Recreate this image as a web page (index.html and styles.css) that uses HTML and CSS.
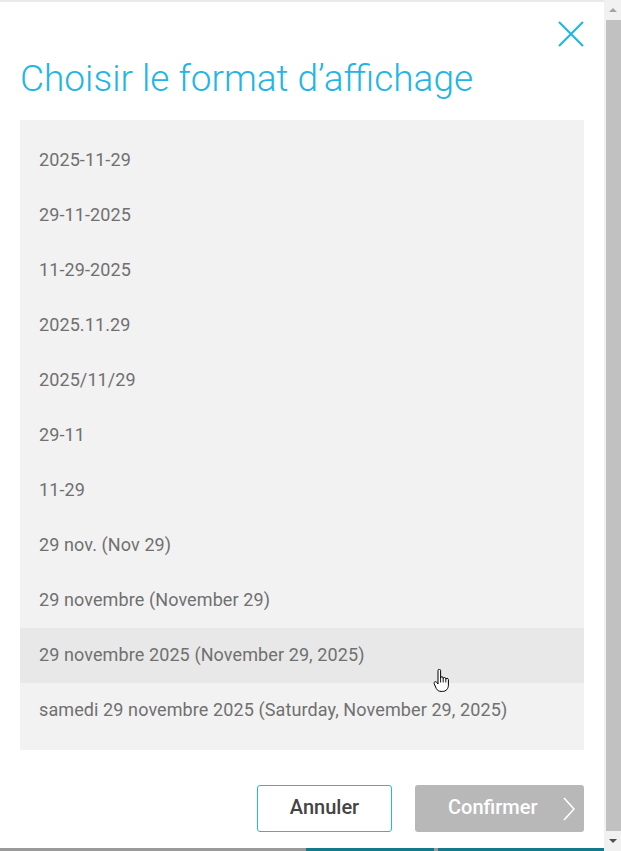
FILE: index.html
```html
<!DOCTYPE html>
<html lang="fr">
<head>
<meta charset="utf-8">
<link rel="stylesheet" href="styles.css">
</head>
<body>
<div class="screen">
  <div class="modal">
    <div class="top-line"></div>
    <div class="close-row">
      <svg class="close" width="26" height="26" viewBox="0 0 26 26"><path d="M1 1 L25 25 M25 1 L1 25" stroke="#22b5e5" stroke-width="2.2" fill="none"/></svg>
    </div>
    <h1 class="title">Choisir le format d’affichage</h1>
    <ul class="list">
      <li>2025-11-29</li>
      <li>29-11-2025</li>
      <li>11-29-2025</li>
      <li>2025.11.29</li>
      <li>2025/11/29</li>
      <li>29-11</li>
      <li>11-29</li>
      <li>29 nov. (Nov 29)</li>
      <li>29 novembre (November 29)</li>
      <li class="hover">29 novembre 2025 (November 29, 2025)
        <svg class="cursor" width="18" height="24" viewBox="0 0 18 24"><path d="M5 1.5c0-.8.6-1.3 1.3-1.3s1.3.5 1.3 1.3v7.5c0-.8.6-1.3 1.3-1.3s1.3.5 1.3 1.3v.8c0-.8.6-1.3 1.3-1.3s1.3.5 1.3 1.3v.8c0-.8.6-1.3 1.3-1.3s1.3.5 1.3 1.3v5.5c0 3.5-2.3 6.3-5.8 6.3h-1.6c-2.2 0-3.5-1-4.7-2.8L1.3 15c-.5-.8-.3-1.7.4-2.1.7-.4 1.6-.2 2.1.5L5 15z" fill="#fff" stroke="#000" stroke-width="1" stroke-linejoin="round"/><path d="M7.6 9v4.5M10.2 10v3.5M12.8 10.8v2.7" stroke="#000" stroke-width="0.9"/></svg>
      </li>
      <li>samedi 29 novembre 2025 (Saturday, November 29, 2025)</li>
    </ul>
    <div class="actions">
      <button class="btn btn-cancel">Annuler</button>
      <button class="btn btn-confirm">Confirmer
        <svg class="chev" width="12" height="24" viewBox="0 0 12 24"><path d="M1 1 L11 12 L1 23" stroke="#fff" stroke-width="1.6" fill="none"/></svg>
      </button>
    </div>
  </div>
  <div class="scrollbar">
    <div class="arrow up"></div>
    <div class="thumb"></div>
    <div class="arrow down"></div>
  </div>
  <div class="bottom-strip">
    <div class="seg gray1"></div>
    <div class="seg teal1"></div>
    <div class="seg gray2"></div>
    <div class="seg teal2"></div>
  </div>
</div>
</body>
</html>
```

FILE: styles.css
```css
* { box-sizing: border-box; }
html, body { margin: 0; padding: 0; }
body {
  width: 621px;
  height: 851px;
  overflow: hidden;
  background: #fff;
  font-family: Roboto, "Liberation Sans", sans-serif;
}
.screen {
  position: relative;
  width: 621px;
  height: 851px;
  display: grid;
  grid-template-columns: 604px 17px;
  grid-template-rows: 848px 3px;
}
.modal {
  grid-column: 1;
  grid-row: 1;
  background: #fff;
  display: flex;
  flex-direction: column;
  padding: 0 20px;
  min-width: 0;
}
.top-line {
  height: 2px;
  margin: 0 -20px;
  background: #e9e9e9;
}
.close-row {
  display: flex;
  justify-content: flex-end;
  padding-top: 19px;
  height: 45px;
}
.close { display: block; margin-right: 0; }
.title {
  margin: 12px 0 0;
  font-weight: 300;
  font-size: 37px;
  line-height: 40px;
  color: #22b5e5;
  height: 61px;
  white-space: nowrap;
}
.list {
  list-style: none;
  margin: 0;
  padding: 13px 0 12px;
  background: #f2f2f2;
}
.list li {
  position: relative;
  height: 55px;
  line-height: 54px;
  padding-left: 19px;
  font-size: 18px;
  letter-spacing: 0.1px;
  color: #707070;
  white-space: nowrap;
}
.list li.hover { background: #e8e8e8; }
.cursor {
  position: absolute;
  left: 413px;
  top: 41px;
}
.actions {
  display: flex;
  justify-content: flex-end;
  gap: 23px;
  margin-top: 35px;
}
.btn {
  height: 47px;
  border-radius: 3px;
  font-family: Roboto, "Liberation Sans", sans-serif;
  font-size: 20px;
  font-weight: 500;
  padding: 0 0 3px;
  display: flex;
  align-items: center;
  justify-content: center;
}
.btn-cancel {
  width: 135px;
  background: #fff;
  border: 1px solid #29b6e6;
  color: #444;
}
.btn-confirm {
  width: 169px;
  background: #b8b8b8;
  border: none;
  color: #fff;
  justify-content: flex-start;
  padding-left: 33px;
}
.chev { margin-left: 25px; margin-top: 3px; }
.scrollbar {
  grid-column: 2;
  grid-row: 1 / 3;
  background: #f1f1f1;
  display: flex;
  flex-direction: column;
  align-items: center;
}
.arrow { width: 0; height: 0; border-left: 4px solid transparent; border-right: 4px solid transparent; }
.arrow.up { border-bottom: 4px solid #a3a3a3; margin: 8px 0 8px; }
.arrow.down { border-top: 4px solid #505050; margin: 8px 0 8px; }
.thumb { flex: 1; width: 15px; background: #c1c1c1; margin-left: 2px; }
.bottom-strip {
  grid-column: 1;
  grid-row: 2;
  display: flex;
}
.seg { height: 3px; }
.gray1 { width: 306px; background: #9a9a9a; }
.teal1 { width: 128px; background: #127a8a; }
.gray2 { width: 4px; background: #9a9a9a; }
.teal2 { flex: 1; background: #127a8a; }
```
